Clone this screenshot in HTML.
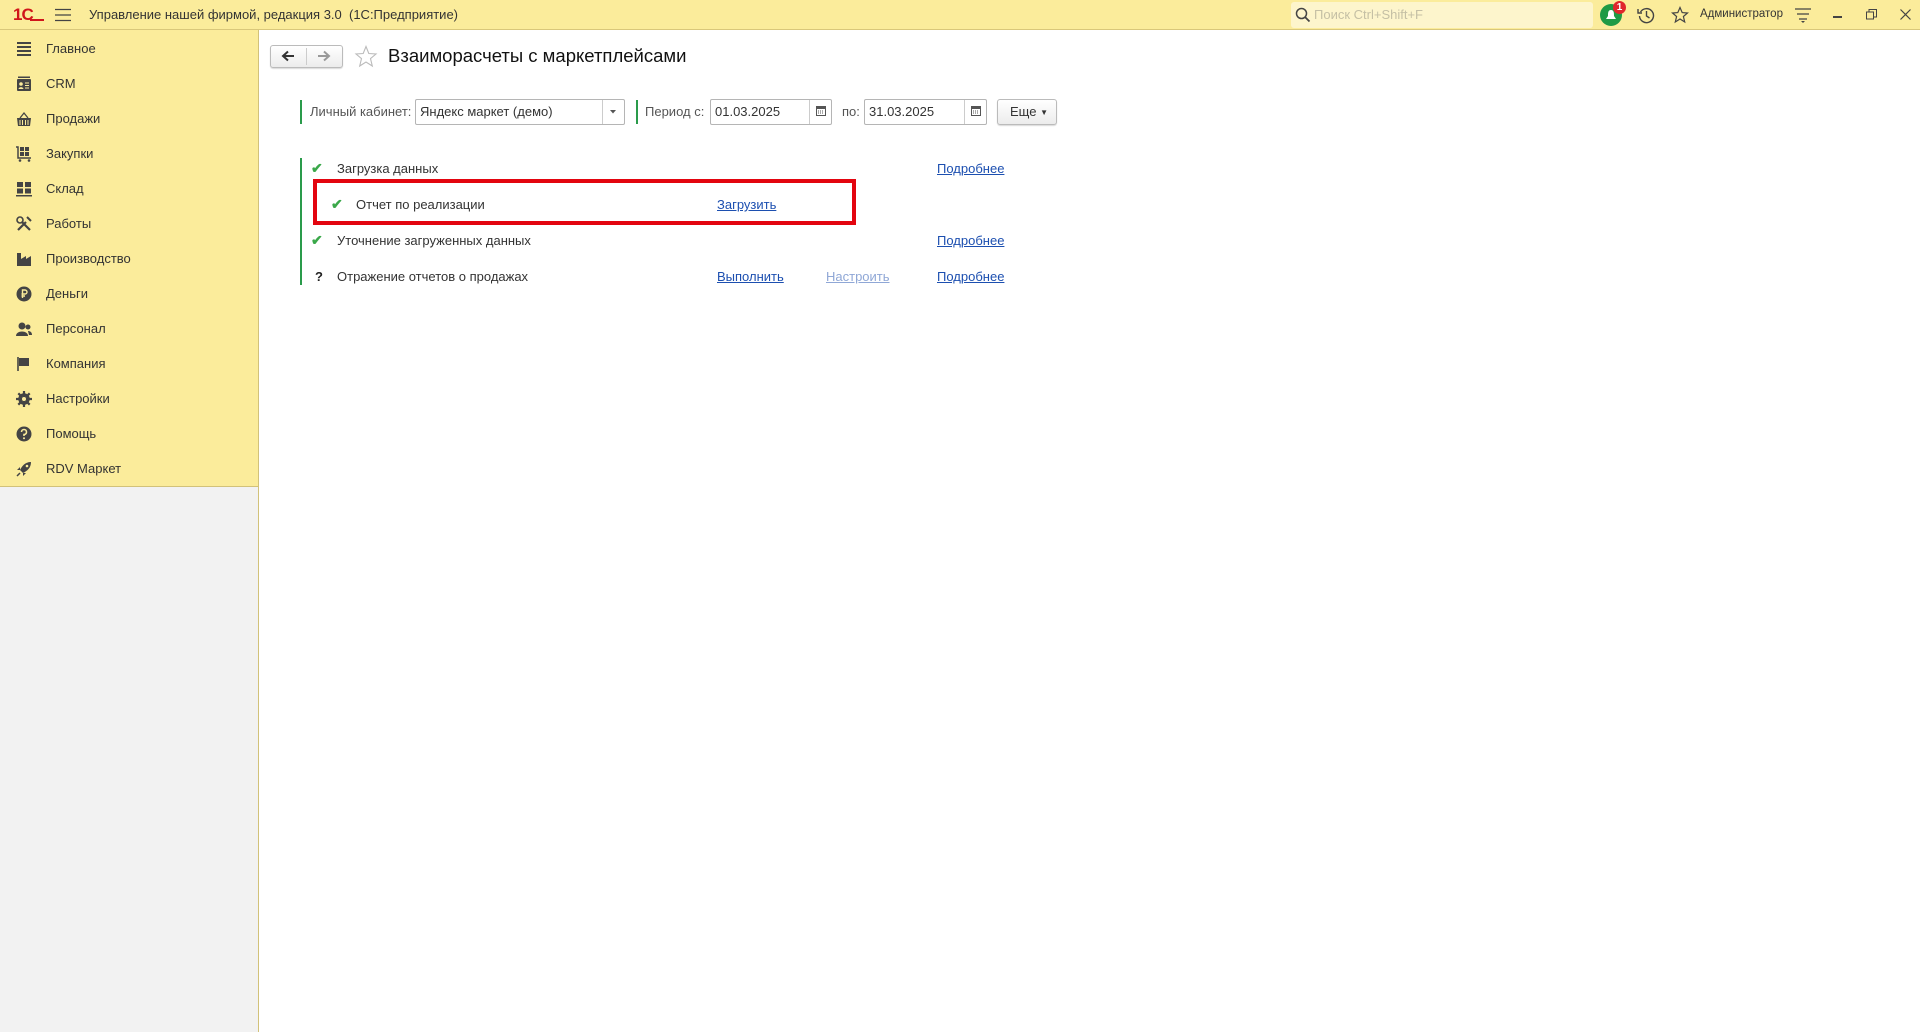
<!DOCTYPE html>
<html><head><meta charset="utf-8"><style>
*{box-sizing:border-box;margin:0;padding:0}
body{width:1920px;height:1032px;overflow:hidden;background:#fff;font-family:"Liberation Sans",Arial,sans-serif;font-size:13px;color:#333;position:relative}
.abs{position:absolute}
#top{left:0;top:0;width:1920px;height:30px;background:#fbec9b;border-bottom:1px solid #d9c77a}
#side{left:0;top:30px;width:259px;height:1002px;background:#f2f2f2;border-right:1px solid #d2c27a}
#sideY{left:0;top:0;width:258px;height:457px;background:#fbec9b;border-bottom:1px solid #d2c27a}
.mi{position:absolute;left:0;width:257px;height:35px;line-height:35px}
.mi span{position:absolute;left:46px;font-size:13px;color:#333}
.mi svg{position:absolute;left:16px;top:10px}
a{color:#1c4fb0;text-decoration:underline}
.btn{border:1px solid #bbb;border-radius:3px;background:linear-gradient(#fff,#ececec);box-shadow:0 1px 1px rgba(0,0,0,.15)}
.inp{border:1px solid #b5b5b5;border-radius:2px;background:#fff;height:26px;line-height:24px;padding-left:4px;font-size:13px;color:#333}
.gb{background:#2a9b4b;width:2px}
.ck{color:#3aa84a;font-size:14px;font-weight:bold}
</style></head><body>
<div id="top" class="abs">
 <div class="abs" style="left:13px;top:5px;font-weight:bold;color:#d0161b;font-size:17px;letter-spacing:-1px">1С</div>
 <div class="abs" style="left:30px;top:19px;width:14px;height:2px;background:#d0161b"></div>
 <svg class="abs" style="left:55px;top:8px" width="16" height="14"><path d="M0 1.5H16M0 7H16M0 12.5H16" stroke="#444" stroke-width="1.3"/></svg>
 <div class="abs" style="left:89px;top:7px;font-size:13px;color:#333">Управление нашей фирмой, редакция 3.0&nbsp; (1С:Предприятие)</div>
 <div class="abs" style="left:1291px;top:2px;width:302px;height:26px;background:#fdf5cc;border-radius:3px"></div>
 <svg class="abs" style="left:1295px;top:7px" width="16" height="16"><circle cx="6.5" cy="6.5" r="5" fill="none" stroke="#444" stroke-width="1.5"/><path d="M10 10L14.5 14.5" stroke="#444" stroke-width="1.8"/></svg>
 <div class="abs" style="left:1314px;top:7px;color:#c5c0a5;font-size:13px">Поиск Ctrl+Shift+F</div>
 <div class="abs" style="left:1600px;top:4px;width:22px;height:22px;border-radius:50%;background:#1f9a45"></div>
 <svg class="abs" style="left:1605px;top:9px" width="12" height="13"><path d="M6 1C3 1 3 4 3 7L1 10H11L9 7C9 4 9 1 6 1Z" fill="#fff"/></svg>
 <div class="abs" style="left:1613px;top:1px;width:13px;height:13px;border-radius:50%;background:#e0262c;color:#fff;font-size:10px;font-weight:bold;text-align:center;line-height:13px">1</div>
 <svg class="abs" style="left:1637px;top:6px" width="18" height="18"><path d="M3.5 6A7 7 0 1 1 2.5 10" fill="none" stroke="#444" stroke-width="1.4"/><path d="M1 3V7H5" fill="none" stroke="#444" stroke-width="1.4"/><path d="M9.5 5V10L12.5 12" fill="none" stroke="#444" stroke-width="1.4"/></svg>
 <svg class="abs" style="left:1671px;top:6px" width="18" height="18"><path d="M9 1.5L11.2 6.6L16.5 7L12.4 10.5L13.7 16L9 13L4.3 16L5.6 10.5L1.5 7L6.8 6.6Z" fill="none" stroke="#444" stroke-width="1.2"/></svg>
 <div class="abs" style="left:1700px;top:8px;font-size:11.5px;color:#333">Администратор</div>
 <svg class="abs" style="left:1795px;top:8px" width="16" height="16"><path d="M0 1H16M2 6H14M4 11H12" stroke="#444" stroke-width="1.3"/><path d="M6 13H10L8 15Z" fill="#444"/></svg>
 <div class="abs" style="left:1833px;top:16px;width:9px;height:1.5px;background:#444"></div>
 <svg class="abs" style="left:1866px;top:9px" width="11" height="11"><rect x="0.5" y="3" width="7" height="7" fill="none" stroke="#444"/><path d="M3 3V0.5H10.5V8H8" fill="none" stroke="#444"/></svg>
 <svg class="abs" style="left:1900px;top:9px" width="11" height="11"><path d="M0.5 0.5L10.5 10.5M10.5 0.5L0.5 10.5" stroke="#444" stroke-width="1.2"/></svg>
</div>
<div id="side" class="abs"><div id="sideY" class="abs">
 <div class="mi" style="top:1px"><svg width="16" height="16"><path d="M1 2H15M1 6H15M1 10H15M1 14H15" stroke="#444" stroke-width="2"/></svg><span>Главное</span></div>
 <div class="mi" style="top:36px"><svg width="16" height="16"><rect x="1" y="3" width="14" height="12" rx="1" fill="#444"/><rect x="2" y="0.5" width="12" height="1.5" fill="#444"/><circle cx="5" cy="8" r="1.8" fill="#fbec9b"/><path d="M2.5 13C3 10.5 7 10.5 7.5 13Z" fill="#fbec9b"/><path d="M9 7H13M9 9.5H13M9 12H13" stroke="#fbec9b"/></svg><span>CRM</span></div>
 <div class="mi" style="top:71px"><svg width="16" height="16"><path d="M1 7H15L14 15H2Z" fill="#444"/><path d="M4 7L8 2L12 7" fill="none" stroke="#444" stroke-width="1.3"/><path d="M4 9V14M6.5 9V14M9.5 9V14M12 9V14" stroke="#fbec9b"/></svg><span>Продажи</span></div>
 <div class="mi" style="top:106px"><svg width="16" height="16"><path d="M0 1H2V12H15" fill="none" stroke="#444" stroke-width="1.5"/><rect x="4" y="1" width="4" height="4" fill="#444"/><rect x="9" y="1" width="4" height="4" fill="#444"/><rect x="4" y="6" width="4" height="4" fill="#444"/><rect x="9" y="6" width="4" height="4" fill="#444"/><circle cx="4" cy="14.5" r="1.3" fill="#444"/><circle cx="13" cy="14.5" r="1.3" fill="#444"/></svg><span>Закупки</span></div>
 <div class="mi" style="top:141px"><svg width="16" height="16"><rect x="1" y="1" width="6" height="5" fill="#444"/><rect x="9" y="1" width="6" height="5" fill="#444"/><rect x="1" y="7.5" width="6" height="5" fill="#444"/><rect x="9" y="7.5" width="6" height="5" fill="#444"/><rect x="0" y="14" width="16" height="1.5" fill="#444"/></svg><span>Склад</span></div>
 <div class="mi" style="top:176px"><svg width="16" height="16"><path d="M2 14L10 6M14 14L6 6" stroke="#444" stroke-width="2.2"/><circle cx="4" cy="4" r="3" fill="none" stroke="#444" stroke-width="1.6"/><path d="M11 1L15 5" stroke="#444" stroke-width="2"/></svg><span>Работы</span></div>
 <div class="mi" style="top:211px"><svg width="16" height="16"><path d="M1 15V2H5V8L10 5V8L15 5V15Z" fill="#444"/></svg><span>Производство</span></div>
 <div class="mi" style="top:246px"><svg width="16" height="16"><circle cx="8" cy="8" r="7.5" fill="#444"/><path d="M6.5 12V4H9A2 2 0 0 1 9 8H5.5M5.5 10H9" fill="none" stroke="#fbec9b" stroke-width="1.4"/></svg><span>Деньги</span></div>
 <div class="mi" style="top:281px"><svg width="16" height="16"><circle cx="6" cy="5" r="3.5" fill="#444"/><path d="M0 15C0 9 12 9 12 15Z" fill="#444"/><circle cx="12" cy="6" r="2.5" fill="#444"/><path d="M12 10C14 10 16 11 16 14H13Z" fill="#444"/></svg><span>Персонал</span></div>
 <div class="mi" style="top:316px"><svg width="16" height="16"><path d="M2 1V15" stroke="#444" stroke-width="1.6"/><path d="M3 2H13V10H3Z" fill="#444"/></svg><span>Компания</span></div>
 <div class="mi" style="top:351px"><svg width="16" height="16"><circle cx="8" cy="8" r="4.5" fill="none" stroke="#444" stroke-width="2.5"/><path d="M8 0V16M0 8H16M2.3 2.3L13.7 13.7M13.7 2.3L2.3 13.7" stroke="#444" stroke-width="2.2"/><circle cx="8" cy="8" r="2" fill="#fbec9b"/></svg><span>Настройки</span></div>
 <div class="mi" style="top:386px"><svg width="16" height="16"><circle cx="8" cy="8" r="7.5" fill="#444"/><path d="M5.5 6A2.5 2.5 0 1 1 8 8.5V10" fill="none" stroke="#fbec9b" stroke-width="1.6"/><circle cx="8" cy="12.3" r="1" fill="#fbec9b"/></svg><span>Помощь</span></div>
 <div class="mi" style="top:421px"><svg width="16" height="16"><path d="M15 1C9 1 6 5 4 9L7 12C11 10 15 7 15 1Z" fill="#444"/><path d="M4 9L1 9L4 6Z M7 12V15L10 12Z" fill="#444"/><path d="M4 12L1 15" stroke="#444" stroke-width="1.5"/><circle cx="11" cy="5" r="1.3" fill="#fbec9b"/></svg><span>RDV Маркет</span></div>
</div></div>

<div class="abs btn" style="left:270px;top:45px;width:73px;height:23px"></div>
<div class="abs" style="left:306px;top:48px;width:1px;height:17px;background:#ccc"></div>
<svg class="abs" style="left:281px;top:50px" width="14" height="12"><path d="M13 6H3M7 1.5L2 6L7 10.5" fill="none" stroke="#333" stroke-width="2"/></svg>
<svg class="abs" style="left:317px;top:50px" width="14" height="12"><path d="M1 6H11M7 1.5L12 6L7 10.5" fill="none" stroke="#999" stroke-width="2"/></svg>
<svg class="abs" style="left:354px;top:45px" width="24" height="23"><path d="M12 1.5L14.8 8.5L22 9L16.5 13.6L18.3 21L12 17L5.7 21L7.5 13.6L2 9L9.2 8.5Z" fill="none" stroke="#bbb" stroke-width="1.1"/></svg>
<div class="abs" style="left:388px;top:45px;font-size:18.5px;color:#111">Взаиморасчеты с маркетплейсами</div>

<div class="abs gb" style="left:300px;top:100px;height:24px"></div>
<div class="abs" style="left:310px;top:104px;color:#555">Личный кабинет:</div>
<div class="abs inp" style="left:415px;top:99px;width:210px">Яндекс маркет (демо)</div>
<div class="abs" style="left:602px;top:100px;width:1px;height:24px;background:#ccc"></div>
<svg class="abs" style="left:610px;top:110px" width="6" height="4"><path d="M0 0H6L3 3.5Z" fill="#555"/></svg>
<div class="abs gb" style="left:636px;top:100px;height:24px"></div>
<div class="abs" style="left:645px;top:104px;color:#555">Период с:</div>
<div class="abs inp" style="left:710px;top:99px;width:122px">01.03.2025</div>
<div class="abs" style="left:809px;top:100px;width:1px;height:24px;background:#ccc"></div>
<svg class="abs" style="left:816px;top:105px" width="10" height="11"><rect x="0.5" y="1.5" width="9" height="9" fill="none" stroke="#555"/><rect x="0.5" y="1.5" width="9" height="2.5" fill="#555"/><path d="M2 6H8M2 8H8" stroke="#555" stroke-dasharray="1 1"/></svg>
<div class="abs" style="left:842px;top:104px;color:#555">по:</div>
<div class="abs inp" style="left:864px;top:99px;width:123px">31.03.2025</div>
<div class="abs" style="left:964px;top:100px;width:1px;height:24px;background:#ccc"></div>
<svg class="abs" style="left:971px;top:105px" width="10" height="11"><rect x="0.5" y="1.5" width="9" height="9" fill="none" stroke="#555"/><rect x="0.5" y="1.5" width="9" height="2.5" fill="#555"/><path d="M2 6H8M2 8H8" stroke="#555" stroke-dasharray="1 1"/></svg>
<div class="abs btn" style="left:997px;top:99px;width:60px;height:26px;line-height:24px;padding-left:12px;color:#333">Еще <span style="font-size:8px;vertical-align:1px">▼</span></div>

<div class="abs gb" style="left:300px;top:158px;height:127px"></div>
<div class="abs ck" style="left:311px;top:160px">✔</div>
<div class="abs" style="left:337px;top:161px">Загрузка данных</div>
<a class="abs" style="left:937px;top:161px">Подробнее</a>

<div class="abs" style="left:313px;top:179px;width:543px;height:46px;border:4px solid #e3050f"></div>
<div class="abs ck" style="left:331px;top:196px">✔</div>
<div class="abs" style="left:356px;top:197px">Отчет по реализации</div>
<a class="abs" style="left:717px;top:197px">Загрузить</a>

<div class="abs ck" style="left:311px;top:232px">✔</div>
<div class="abs" style="left:337px;top:233px">Уточнение загруженных данных</div>
<a class="abs" style="left:937px;top:233px">Подробнее</a>

<div class="abs" style="left:315px;top:269px;font-weight:bold;color:#222">?</div>
<div class="abs" style="left:337px;top:269px">Отражение отчетов о продажах</div>
<a class="abs" style="left:717px;top:269px">Выполнить</a>
<a class="abs" style="left:826px;top:269px;color:#8fa7d6">Настроить</a>
<a class="abs" style="left:937px;top:269px">Подробнее</a>
</body></html>
